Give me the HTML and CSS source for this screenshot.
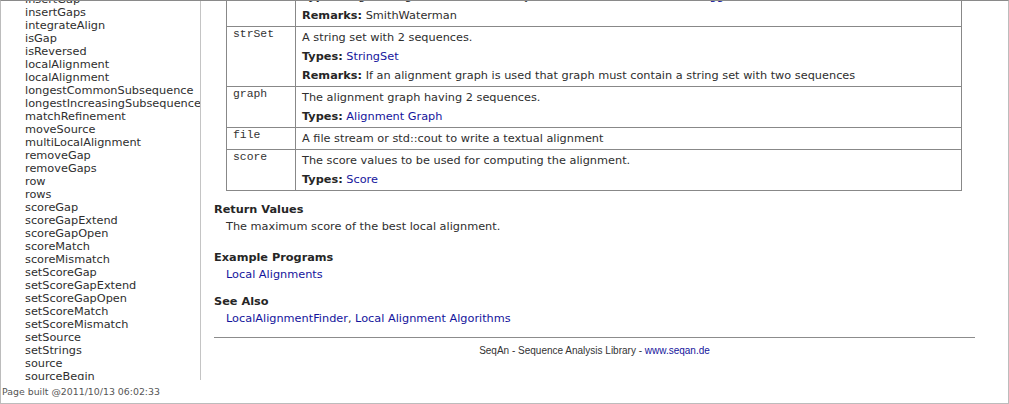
FILE: index.html
```html
<!DOCTYPE html>
<html>
<head>
<meta charset="utf-8">
<title>localAlignment</title>
<link rel="stylesheet" href="styles.css">
</head>
<body>
<div class="window">
  <div class="left">
    <div class="sidebar">
      <ul class="index">
        <li>insertGap</li>
        <li>insertGaps</li>
        <li>integrateAlign</li>
        <li>isGap</li>
        <li>isReversed</li>
        <li>localAlignment</li>
        <li>localAlignment</li>
        <li>longestCommonSubsequence</li>
        <li>longestIncreasingSubsequence</li>
        <li>matchRefinement</li>
        <li>moveSource</li>
        <li>multiLocalAlignment</li>
        <li>removeGap</li>
        <li>removeGaps</li>
        <li>row</li>
        <li>rows</li>
        <li>scoreGap</li>
        <li>scoreGapExtend</li>
        <li>scoreGapOpen</li>
        <li>scoreMatch</li>
        <li>scoreMismatch</li>
        <li>setScoreGap</li>
        <li>setScoreGapExtend</li>
        <li>setScoreGapOpen</li>
        <li>setScoreMatch</li>
        <li>setScoreMismatch</li>
        <li>setSource</li>
        <li>setStrings</li>
        <li>source</li>
        <li>sourceBegin</li>
      </ul>
    </div>
    <div class="built">Page built @2011/10/13 06:02:33</div>
  </div>
  <div class="main">
    <div class="content">
      <div class="params-wrap">
        <table class="params">
          <colgroup><col class="c-name"><col></colgroup>
          <tr>
            <td class="name">tag</td>
            <td class="desc">
              <p>A tag indicating the alignment algorithm to use.</p>
              <p><b>Types:</b> Tag, the algorithm is selected by <a href="#">SmithWaterman</a> or <a href="#">WatermanEggert</a>, see local</p>
              <p><b>Remarks:</b> SmithWaterman</p>
            </td>
          </tr>
          <tr>
            <td class="name">strSet</td>
            <td class="desc">
              <p>A string set with 2 sequences.</p>
              <p><b>Types:</b> <a href="#">StringSet</a></p>
              <p><b>Remarks:</b> If an alignment graph is used that graph must contain a string set with two sequences</p>
            </td>
          </tr>
          <tr>
            <td class="name">graph</td>
            <td class="desc">
              <p>The alignment graph having 2 sequences.</p>
              <p><b>Types:</b> <a href="#">Alignment Graph</a></p>
            </td>
          </tr>
          <tr>
            <td class="name">file</td>
            <td class="desc">
              <p>A file stream or std::cout to write a textual alignment</p>
            </td>
          </tr>
          <tr>
            <td class="name">score</td>
            <td class="desc">
              <p>The score values to be used for computing the alignment.</p>
              <p><b>Types:</b> <a href="#">Score</a></p>
            </td>
          </tr>
        </table>
      </div>

      <div class="section returns">
        <h3>Return Values</h3>
        <p>The maximum score of the best local alignment.</p>
      </div>
      <div class="section examples">
        <h3>Example Programs</h3>
        <p><a href="#">Local Alignments</a></p>
      </div>
      <div class="section seealso">
        <h3>See Also</h3>
        <p><a href="#">LocalAlignmentFinder</a>, <a href="#">Local Alignment Algorithms</a></p>
      </div>

      <div class="footer">
        SeqAn - Sequence Analysis Library - <a href="#">www.seqan.de</a>
      </div>
    </div>
  </div>
</div>
</body>
</html>
```
FILE: styles.css
```css
html, body {
  margin: 0;
  padding: 0;
  background: #fff;
}
body {
  font-family: "DejaVu Sans", Verdana, sans-serif;
  font-size: 11.3px;
  line-height: 13px;
  color: #2e2e2e;
}
a {
  color: #14149c;
  text-decoration: none;
}
.window {
  box-sizing: border-box;
  width: 1009px;
  height: 404px;
  border: 1px solid #bcbcbc;
  border-top-color: #8a8a8a;
  display: flex;
  overflow: hidden;
}
.left {
  width: 200px;
  flex: none;
  display: flex;
  flex-direction: column;
}
.sidebar {
  height: 379px;
  border-right: 1px solid #c4c4c4;
  overflow: hidden;
  flex: none;
}
.index {
  list-style: none;
  margin: -8px 0 0 0;
  padding: 0 0 0 24px;
  white-space: nowrap;
}
.index li {
  line-height: 13px;
}
.built {
  padding: 6px 0 0 1px;
  font-size: 9.4px;
  line-height: 12px;
  color: #555;
  white-space: nowrap;
}
.main {
  flex: 1;
  overflow: hidden;
}
.content {
  margin-top: -35px;
  padding: 0 33px 0 13px;
}
.params-wrap {
  padding: 0 13px 0 12px;
}
.params {
  width: 100%;
  border-collapse: collapse;
  border: 1px solid #888;
}
.c-name {
  width: 69px;
}
.params td {
  border: 1px solid #888;
  vertical-align: top;
  padding: 4px 6px;
}
.params td.name {
  font-family: "Liberation Mono", "Courier New", monospace;
  font-size: 11.4px;
  line-height: 13px;
  padding-top: 1px;
  color: #333;
}
.params p {
  margin: 0;
  line-height: 13px;
}
.params p + p {
  margin-top: 6px;
}
.params b, .section h3 {
  color: #262626;
}
.section h3 {
  margin: 0;
  font-size: 11.3px;
  line-height: 13px;
  font-weight: bold;
}
.section p {
  margin: 4px 0 0 12px;
}
.returns {
  margin-top: 12px;
}
.examples {
  margin-top: 18px;
}
.seealso {
  margin-top: 14px;
}
.footer {
  margin-top: 12px;
  border-top: 1px solid #8c8c8c;
  padding-top: 7px;
  text-align: center;
  font-family: "Liberation Sans", Arial, sans-serif;
  font-size: 10px;
  line-height: 12px;
  color: #333;
}
```
